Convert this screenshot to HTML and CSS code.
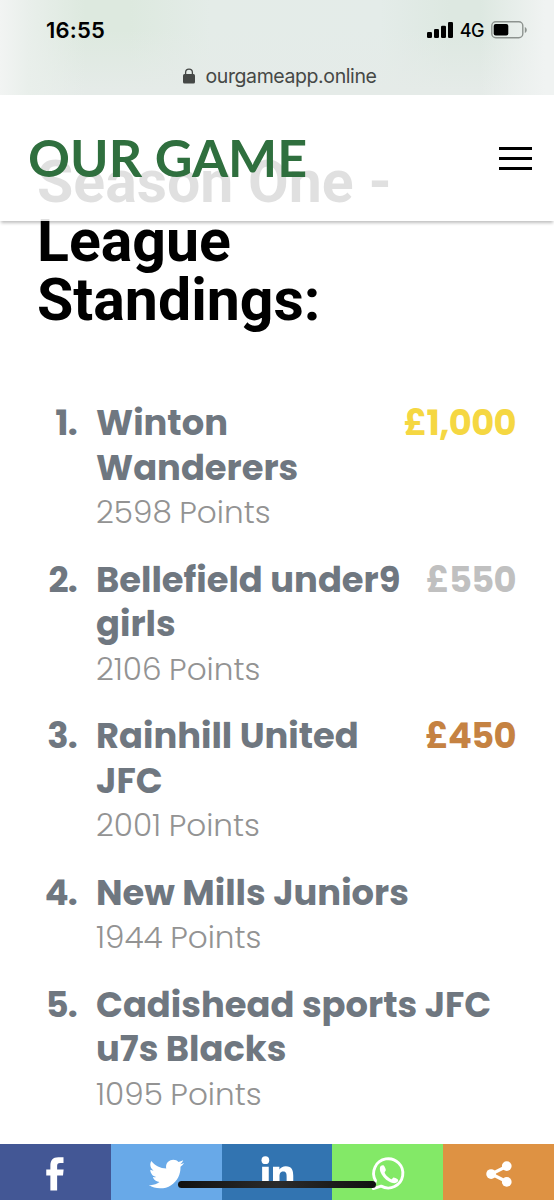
FILE: index.html
```html
<!DOCTYPE html>
<html lang="en">
<head>
<meta charset="UTF-8">
<meta name="viewport" content="width=device-width, initial-scale=1.0">
<title>Our Game - League Standings</title>
<link rel="stylesheet" href="styles.css">
</head>
<body>

<div class="browser-bar">
    <div class="status">
        <span class="time">16:55</span>
        <div class="status-icons">
            <svg width="26" height="16" viewBox="0 0 26 16">
                <rect x="0" y="10" width="5" height="6" rx="1.3"/>
                <rect x="7" y="7" width="5" height="9" rx="1.3"/>
                <rect x="14" y="3.7" width="5" height="12.3" rx="1.3"/>
                <rect x="21" y="0" width="5" height="16" rx="1.3"/>
            </svg>
            <span class="network">4G</span>
            <svg width="36" height="18" viewBox="0 0 36 18">
                <rect x="0.8" y="0.8" width="31" height="16" rx="4" fill="none" stroke="#8d938f" stroke-width="1.4"/>
                <rect x="2.7" y="3" width="14.6" height="11.6" rx="2"/>
                <path d="M33.8 6c2.6 1 2.6 5 0 6z" fill="#8d938f"/>
            </svg>
        </div>
    </div>
    <div class="address">
        <svg width="12" height="16" viewBox="0 0 12 16">
            <path d="M2.6 7V4.5a3.4 3.4 0 0 1 6.8 0V7" fill="none" stroke="#454846" stroke-width="1.3"/>
            <rect x="0" y="6" width="12" height="9.6" rx="1.5" fill="#454846"/>
        </svg>
        <span>ourgameapp.online</span>
    </div>
</div>

<nav class="navbar">
    <a class="brand" href="#">OUR GAME</a>
    <button class="menu-btn" aria-label="Menu"><span></span><span></span><span></span></button>
</nav>

<main class="container">
    <h1>Season One -<br>League<br>Standings:</h1>

    <ol class="standings">
        <li>
            <span class="rank">1.</span>
            <div class="team"><h2>Winton<br>Wanderers</h2><p>2598 Points</p></div>
            <span class="prize gold">£1,000</span>
        </li>
        <li>
            <span class="rank">2.</span>
            <div class="team"><h2>Bellefield under9<br>girls</h2><p>2106 Points</p></div>
            <span class="prize silver">£550</span>
        </li>
        <li>
            <span class="rank">3.</span>
            <div class="team"><h2>Rainhill United<br>JFC</h2><p>2001 Points</p></div>
            <span class="prize bronze">£450</span>
        </li>
        <li>
            <span class="rank">4.</span>
            <div class="team"><h2>New Mills Juniors</h2><p>1944 Points</p></div>
        </li>
        <li>
            <span class="rank">5.</span>
            <div class="team"><h2>Cadishead sports JFC<br>u7s Blacks</h2><p>1095 Points</p></div>
        </li>
    </ol>
</main>

<footer class="share-bar">
    <a class="facebook" href="#" aria-label="Facebook">
        <svg viewBox="0 0 40 40"><path d="m21.7 16.4h5.2l-.5 4.8h-4.7v12h-5.400v-12h-3.300v-4.800h3.300v-2.900c0-4.500 1.800-6.900 6.400-6.900h4.100v4.600h-2.700c-1.800 0-2.400.8-2.400 2.400z"/></svg>
    </a>
    <a class="twitter" href="#" aria-label="Twitter">
        <svg viewBox="0 0 40 40"><path d="m31.5 11.7c1.3-0.8 2.2-2 2.7-3.4-1.4 0.7-2.7 1.2-4 1.4-1.1-1.2-2.6-1.9-4.4-1.9-1.7 0-3.2 0.6-4.4 1.8-1.2 1.2-1.8 2.7-1.8 4.4 0 0.5 0.1 0.9 0.2 1.3-5.1-0.1-9.4-2.3-12.7-6.4-0.6 1-0.9 2.1-0.9 3.1 0 2.2 1 3.9 2.8 5.2-1.1-0.1-2-0.4-2.8-0.8 0 1.5 0.5 2.8 1.4 4 0.9 1.1 2.1 1.8 3.5 2.1-0.5 0.1-1 0.2-1.6 0.2-0.5 0-0.9 0-1.1-0.1 0.4 1.2 1.1 2.3 2.1 3 1.1 0.8 2.3 1.2 3.6 1.3-2.2 1.7-4.7 2.6-7.6 2.6-0.7 0-1.2 0-1.5-0.1 2.8 1.9 6 2.8 9.5 2.8 3.5 0 6.7-0.9 9.4-2.7 2.8-1.8 4.8-4.1 6.1-6.7 1.3-2.6 1.9-5.3 1.9-8.1v-0.8c1.3-0.9 2.3-2 3.1-3.2-1.1 0.5-2.3 0.8-3.5 1z"/></svg>
    </a>
    <a class="linkedin" href="#" aria-label="LinkedIn">
        <svg viewBox="0 0 40 40"><circle cx="10.7" cy="8.900" r="3.1"/><path d="m8.100 14.100h5.300v17h-5.300z m8.700 0h5.100v2.300c1-1.700 2.800-2.700 5.100-2.700 5 0 6 3.300 6 7.700v9.700h-5.300v-8.700c0-2.100-.1-4.300-2.700-4.300s-3 2-3 4.200v8.800h-5.200z"/></svg>
    </a>
    <a class="whatsapp" href="#" aria-label="WhatsApp">
        <svg viewBox="0 0 40 40">
            <path d="M8.200 31.700l1.800-6.500a11.700 11.700 0 1 1 4.500 4.500z" fill="none" stroke="#fff" stroke-width="2.300" stroke-linejoin="round"/>
            <path d="M14.200 13.600c1.200-.9 2.400-.9 3.100.5.700 1.400 1.200 2.500.8 3.300-.6.900-1.100 1.200-.5 2.300 1.100 1.900 2.600 3.300 4.500 4.300.9.400 1.300-.3 2-1.100.6-.6 2 .3 3.600 1.200.9.600.4 2-.8 2.700-1.600 1-3.700.5-6.100-.8-3.200-1.900-5.800-4.800-6.900-7.900-.6-1.700-.6-3.500.3-4.500z"/>
        </svg>
    </a>
    <a class="sharethis" href="#" aria-label="Share">
        <svg viewBox="0 0 40 40">
            <path d="M26.200 13.800L13.900 20l12.300 6.200" fill="none" stroke="#fff" stroke-width="2.500"/>
            <circle cx="13.700" cy="20" r="3.900"/><circle cx="26.200" cy="13.700" r="3.900"/><circle cx="26.200" cy="26.300" r="3.900"/>
        </svg>
    </a>
</footer>
<div class="home-indicator"></div>

</body>
</html>
```

FILE: styles.css
```css
* {
    box-sizing: border-box;
}

body {
    font-family: Poppins, Inter, sans-serif;
    margin: 0;
    padding: 0;
    height: 1200px;
    overflow: hidden;
    background-color: #fff;
}

h1, h2, p, ol {
    margin: 0;
    padding: 0;
}

/* Status and address */
.browser-bar {
    height: 95px;
    padding-top: 18px;
    font-family: Inter, sans-serif;
    background: linear-gradient(90deg, #f2f4f3 0, #e9efeb 28px, rgba(233, 239, 235, 0) 85px, rgba(233, 239, 235, 0) 480px, #f0f3f2 545px),
        linear-gradient(180deg, rgba(228, 236, 232, 0) 30px, #e5ebe8 90px),
        linear-gradient(90deg, #dde9df 130px, #e4ece8 210px, #e4ece9 380px, #dde8e1 450px);
}

.status {
    display: flex;
    justify-content: space-between;
    align-items: center;
    height: 24px;
    padding: 0 27px 0 46px;
}

.time {
    font-size: 22px;
    font-weight: 600;
    letter-spacing: 0.2px;
}

.status-icons {
    display: flex;
    align-items: center;
    gap: 7px;
}

.network {
    font-size: 18px;
    font-weight: 500;
    letter-spacing: -0.5px;
}

.address {
    display: flex;
    justify-content: center;
    align-items: center;
    gap: 11px;
    height: 24px;
    margin-top: 22px;
    padding-left: 5px;
    color: #454846;
    font-size: 19.5px;
    letter-spacing: -0.4px;
}

/* Navbar sits over the scrolled page */
.navbar {
    position: fixed;
    top: 95px;
    left: 0;
    right: 0;
    z-index: 2;
    display: flex;
    justify-content: space-between;
    align-items: center;
    height: 126px;
    padding: 0 22px 0 28px;
    background-color: rgba(255, 255, 255, 0.88);
    box-shadow: 0 3px 3px -1px rgba(0, 0, 0, 0.25);
}

.brand {
    padding-bottom: 2px;
    color: #2f6f3e;
    font-family: Lato, sans-serif;
    font-size: 52px;
    font-weight: 700;
    line-height: 60px;
    text-decoration: none;
}

.menu-btn {
    display: flex;
    flex-direction: column;
    gap: 7px;
    width: 33px;
    padding: 0;
    border: none;
    background: none;
}

.menu-btn span {
    height: 3px;
    background-color: #000;
}

.container {
    padding: 57px 38px 0 37px;
}

h1 {
    color: #000;
    font-family: Roboto, sans-serif;
    font-size: 59px;
    font-weight: 700;
    line-height: 59px;
}

/* Standings */
.standings {
    display: flex;
    flex-direction: column;
    gap: 22.8px;
    margin-top: 72px;
    list-style: none;
    line-height: 44.6px;
}

.standings li {
    display: grid;
    grid-template-columns: 40px 1fr auto;
    column-gap: 19px;
}

.rank, h2, .prize {
    color: #6f7780;
    font-size: 35.3px;
    font-weight: 700;
    line-height: inherit;
    white-space: nowrap;
}

.rank {
    justify-self: end;
    letter-spacing: -0.8px;
}

.team {
    min-width: 0;
}

.team p {
    color: #939393;
    font-size: 31.1px;
    font-weight: 300;
    word-spacing: -1px;
}

.prize {
    letter-spacing: -0.6px;
}

.prize.gold {
    color: #f5d742;
}

.prize.silver {
    color: #c0c0c0;
}

.prize.bronze {
    color: #c58242;
}

/* Share buttons */
.share-bar {
    position: fixed;
    top: 1144px;
    left: 0;
    right: 0;
    display: grid;
    grid-template-columns: repeat(5, 1fr);
    height: 60px;
}

.share-bar a {
    display: flex;
    justify-content: center;
    align-items: center;
}

.share-bar svg {
    width: 50px;
    height: 50px;
    fill: #fff;
}

.share-bar .twitter svg {
    width: 47px;
    height: 48px;
}

.facebook {
    background-color: #435795;
}

.twitter {
    background-color: #68a9e8;
}

.linkedin {
    background-color: #3274b1;
}

.whatsapp {
    background-color: #83e967;
}

.sharethis {
    background-color: #de9243;
}

.home-indicator {
    position: fixed;
    left: 178px;
    top: 1181px;
    width: 198px;
    height: 7px;
    border-radius: 4px;
    background: linear-gradient(90deg, #111, #2b2b2b 50%, #111);
}
```
